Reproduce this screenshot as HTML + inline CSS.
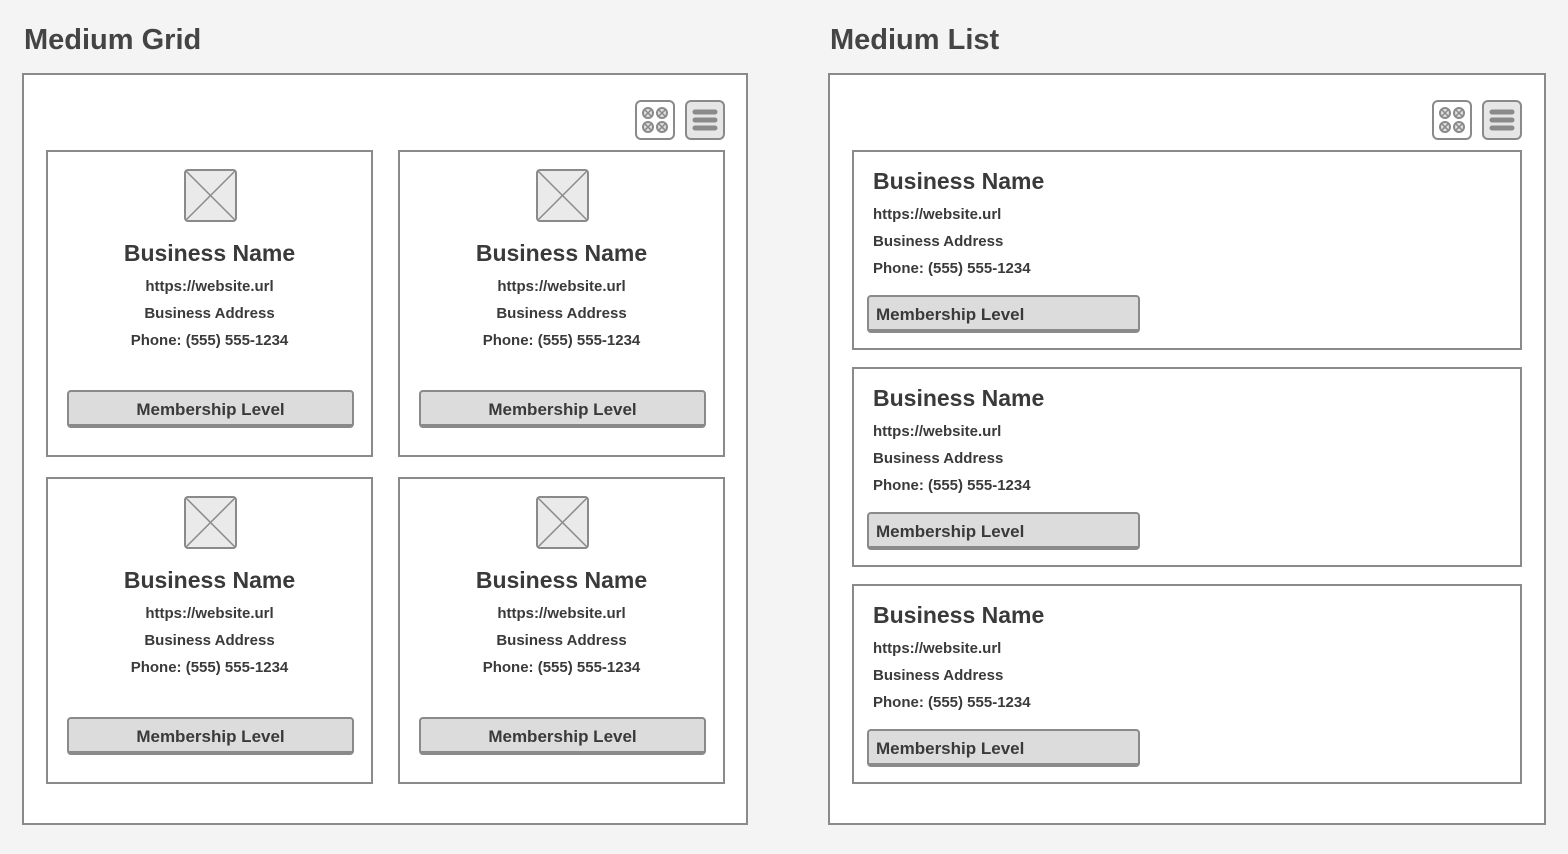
<!DOCTYPE html>
<html><head><style>
*{margin:0;padding:0;box-sizing:border-box}
body{width:1568px;height:854px;background:#f4f4f4;position:relative;font-family:"Liberation Sans",sans-serif;color:#3a3a3a;overflow:hidden}
h1{position:absolute;font-size:29px;font-weight:bold;color:#444;line-height:28px}
.panel{position:absolute;background:#fff;border:2px solid #8a8a8a}
.card{position:absolute;border:2px solid #8a8a8a;background:#fff}
.gc{width:327px;height:307px}
.lc{width:670px;height:200px}
.t{position:absolute;font-weight:bold;white-space:nowrap}
.gc .t{left:0;right:0;text-align:center}
.nm{font-size:23px;line-height:26px}
.ln{font-size:15px;line-height:18px}
.btn{position:absolute;background:#dcdcdc;border:2px solid #8a8a8a;border-bottom-width:4px;border-radius:4px;font-weight:bold;font-size:17px;line-height:35px;height:38px}
.img{position:absolute;left:136px;top:17px;width:53px;height:53px}
.ic{position:absolute;width:40px;height:40px}
</style></head><body>
<h1 style="left:24px;top:26px">Medium Grid</h1>
<h1 style="left:830px;top:26px">Medium List</h1>
<div class="panel" style="left:22px;top:73px;width:726px;height:752px"></div>
<div class="panel" style="left:828px;top:73px;width:718px;height:752px"></div>

<svg class="ic" style="left:635px;top:100px" viewBox="0 0 40 40"><rect x="1" y="1" width="38" height="38" rx="5" fill="#fff" stroke="#8a8a8a" stroke-width="2"/><g fill="#e0e0e0" stroke="#8a8a8a" stroke-width="2"><circle cx="13" cy="13" r="5"/><circle cx="27" cy="13" r="5"/><circle cx="13" cy="27" r="5"/><circle cx="27" cy="27" r="5"/></g><g stroke="#8a8a8a" stroke-width="1.5"><path d="M10 10l6 6M16 10l-6 6M24 10l6 6M30 10l-6 6M10 24l6 6M16 24l-6 6M24 24l6 6M30 24l-6 6"/></g></svg>
<svg class="ic" style="left:685px;top:100px" viewBox="0 0 40 40"><rect x="1" y="1" width="38" height="38" rx="5" fill="#e6e6e6" stroke="#8a8a8a" stroke-width="2"/><g stroke="#8a8a8a" stroke-width="5" stroke-linecap="round"><path d="M10 12h20M10 20h20M10 28h20"/></g></svg>
<svg class="ic" style="left:1432px;top:100px" viewBox="0 0 40 40"><rect x="1" y="1" width="38" height="38" rx="5" fill="#fff" stroke="#8a8a8a" stroke-width="2"/><g fill="#e0e0e0" stroke="#8a8a8a" stroke-width="2"><circle cx="13" cy="13" r="5"/><circle cx="27" cy="13" r="5"/><circle cx="13" cy="27" r="5"/><circle cx="27" cy="27" r="5"/></g><g stroke="#8a8a8a" stroke-width="1.5"><path d="M10 10l6 6M16 10l-6 6M24 10l6 6M30 10l-6 6M10 24l6 6M16 24l-6 6M24 24l6 6M30 24l-6 6"/></g></svg>
<svg class="ic" style="left:1482px;top:100px" viewBox="0 0 40 40"><rect x="1" y="1" width="38" height="38" rx="5" fill="#e6e6e6" stroke="#8a8a8a" stroke-width="2"/><g stroke="#8a8a8a" stroke-width="5" stroke-linecap="round"><path d="M10 12h20M10 20h20M10 28h20"/></g></svg>

<div class="card gc" style="left:46px;top:150px">
<svg class="img" viewBox="0 0 53 53"><rect x="1" y="1" width="51" height="51" rx="3" fill="#eaeaea" stroke="#8a8a8a" stroke-width="2"/><path d="M2 2L51 51M51 2L2 51" stroke="#8a8a8a" stroke-width="1.5"/></svg>
<div class="t nm" style="top:88px">Business Name</div>
<div class="t ln" style="top:126px">https://website.url</div>
<div class="t ln" style="top:153px">Business Address</div>
<div class="t ln" style="top:180px">Phone: (555) 555-1234</div>
<div class="btn" style="left:19px;top:238px;width:287px;text-align:center">Membership Level</div>
</div>
<div class="card gc" style="left:398px;top:150px">
<svg class="img" viewBox="0 0 53 53"><rect x="1" y="1" width="51" height="51" rx="3" fill="#eaeaea" stroke="#8a8a8a" stroke-width="2"/><path d="M2 2L51 51M51 2L2 51" stroke="#8a8a8a" stroke-width="1.5"/></svg>
<div class="t nm" style="top:88px">Business Name</div>
<div class="t ln" style="top:126px">https://website.url</div>
<div class="t ln" style="top:153px">Business Address</div>
<div class="t ln" style="top:180px">Phone: (555) 555-1234</div>
<div class="btn" style="left:19px;top:238px;width:287px;text-align:center">Membership Level</div>
</div>
<div class="card gc" style="left:46px;top:477px">
<svg class="img" viewBox="0 0 53 53"><rect x="1" y="1" width="51" height="51" rx="3" fill="#eaeaea" stroke="#8a8a8a" stroke-width="2"/><path d="M2 2L51 51M51 2L2 51" stroke="#8a8a8a" stroke-width="1.5"/></svg>
<div class="t nm" style="top:88px">Business Name</div>
<div class="t ln" style="top:126px">https://website.url</div>
<div class="t ln" style="top:153px">Business Address</div>
<div class="t ln" style="top:180px">Phone: (555) 555-1234</div>
<div class="btn" style="left:19px;top:238px;width:287px;text-align:center">Membership Level</div>
</div>
<div class="card gc" style="left:398px;top:477px">
<svg class="img" viewBox="0 0 53 53"><rect x="1" y="1" width="51" height="51" rx="3" fill="#eaeaea" stroke="#8a8a8a" stroke-width="2"/><path d="M2 2L51 51M51 2L2 51" stroke="#8a8a8a" stroke-width="1.5"/></svg>
<div class="t nm" style="top:88px">Business Name</div>
<div class="t ln" style="top:126px">https://website.url</div>
<div class="t ln" style="top:153px">Business Address</div>
<div class="t ln" style="top:180px">Phone: (555) 555-1234</div>
<div class="btn" style="left:19px;top:238px;width:287px;text-align:center">Membership Level</div>
</div>

<div class="card lc" style="left:852px;top:150px">
<div class="t nm" style="left:19px;top:16px">Business Name</div>
<div class="t ln" style="left:19px;top:54px">https://website.url</div>
<div class="t ln" style="left:19px;top:81px">Business Address</div>
<div class="t ln" style="left:19px;top:108px">Phone: (555) 555-1234</div>
<div class="btn" style="left:13px;top:143px;width:273px;padding-left:7px">Membership Level</div>
</div>
<div class="card lc" style="left:852px;top:367px">
<div class="t nm" style="left:19px;top:16px">Business Name</div>
<div class="t ln" style="left:19px;top:54px">https://website.url</div>
<div class="t ln" style="left:19px;top:81px">Business Address</div>
<div class="t ln" style="left:19px;top:108px">Phone: (555) 555-1234</div>
<div class="btn" style="left:13px;top:143px;width:273px;padding-left:7px">Membership Level</div>
</div>
<div class="card lc" style="left:852px;top:584px">
<div class="t nm" style="left:19px;top:16px">Business Name</div>
<div class="t ln" style="left:19px;top:54px">https://website.url</div>
<div class="t ln" style="left:19px;top:81px">Business Address</div>
<div class="t ln" style="left:19px;top:108px">Phone: (555) 555-1234</div>
<div class="btn" style="left:13px;top:143px;width:273px;padding-left:7px">Membership Level</div>
</div>
</body></html>
